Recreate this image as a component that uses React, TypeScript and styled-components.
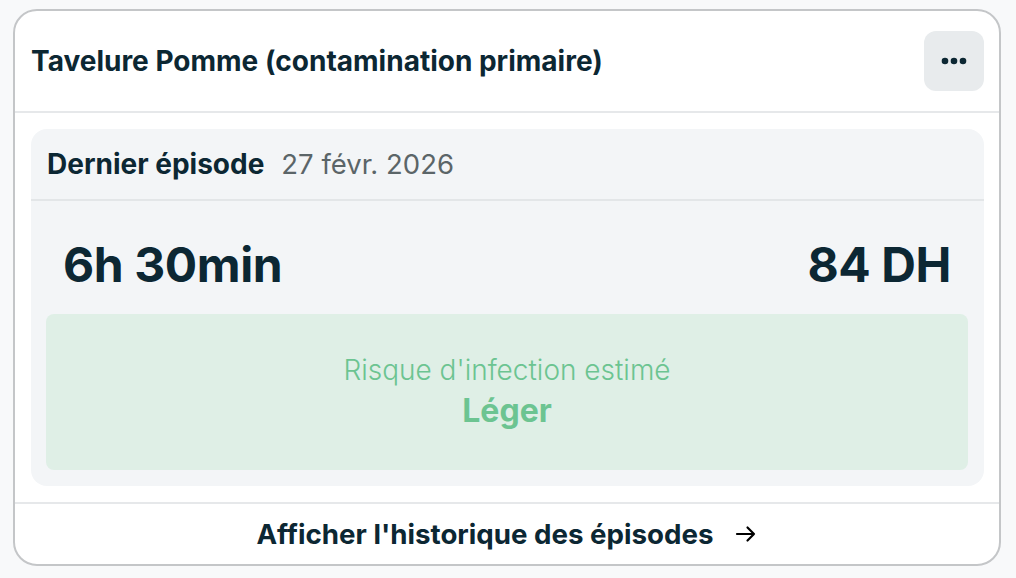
import React from 'react';
import styled, { createGlobalStyle } from 'styled-components';

const ink = '#0c2733';
const muted = '#5b6568';
const green = '#6cc491';

const GlobalStyle = createGlobalStyle`
  html, body {
    margin: 0;
    padding: 0;
    background: #f8f9fa;
    font-family: Inter, 'Noto Sans', sans-serif;
  }
`;

const Page = styled.div`
  padding: 9px 15px 12px 13px;
`;

const Card = styled.section`
  background: #fff;
  border: 2px solid #c4c6c8;
  border-radius: 24px;
  overflow: hidden;
  display: flex;
  flex-direction: column;
  height: 557px;
  box-sizing: border-box;
`;

const Header = styled.header`
  display: flex;
  align-items: center;
  justify-content: space-between;
  padding: 20px 15px 20px 16px;
  border-bottom: 2px solid #e6e8ea;
`;

const Title = styled.h1`
  margin: 0;
  font-size: 28px;
  font-weight: 700;
  color: ${ink};
`;

const MenuButton = styled.button`
  width: 60px;
  height: 60px;
  border: none;
  border-radius: 12px;
  background: #e8ebed;
  display: flex;
  align-items: center;
  justify-content: center;
  padding: 0;
  cursor: pointer;
`;

const Body = styled.div`
  padding: 16px 15px 16px 16px;
`;

const Panel = styled.div`
  background: #f3f5f7;
  border-radius: 16px;
  display: flex;
  flex-direction: column;
  height: 357px;
`;

const PanelHeader = styled.div`
  display: flex;
  align-items: center;
  gap: 17px;
  padding: 0 16px;
  height: 70px;
  border-bottom: 2px solid #e3e6e8;
`;

const Label = styled.span`
  font-size: 28px;
  font-weight: 700;
  color: ${ink};
`;

const DateText = styled.span`
  font-size: 27.5px;
  font-weight: 400;
  color: ${muted};
`;

const Stats = styled.div`
  display: flex;
  justify-content: space-between;
  align-items: center;
  padding: 14px 33px 0 32px;
  height: 113px;
  box-sizing: border-box;
`;

const Stat = styled.span`
  font-size: 48px;
  font-weight: 700;
  color: ${ink};
  letter-spacing: -0.4px;
`;

const Risk = styled.div`
  margin: 0 16px 16px 15px;
  flex: 1;
  background: #dfefe6;
  border-radius: 8px;
  display: flex;
  flex-direction: column;
  align-items: center;
  justify-content: center;
  gap: 5px;
  color: ${green};
`;

const RiskLabel = styled.span`
  font-size: 28px;
  font-weight: 300;
  line-height: 33px;
`;

const RiskLevel = styled.span`
  font-size: 32px;
  font-weight: 700;
  line-height: 38px;
`;

const Footer = styled.a`
  flex: 1;
  border-top: 2px solid #e6e8ea;
  display: flex;
  align-items: center;
  justify-content: center;
  gap: 20px;
  font-size: 27.7px;
  font-weight: 700;
  color: ${ink};
  text-decoration: none;
  cursor: pointer;
`;

const Arrow = styled.svg`
  width: 24px;
  height: 24px;
`;

export default function App() {
  return (
    <>
      <GlobalStyle />
      <Page>
        <Card>
          <Header>
            <Title>Tavelure Pomme (contamination primaire)</Title>
            <MenuButton aria-label="Options">
              <svg width="26" height="8" viewBox="0 0 26 8">
                <circle cx="4" cy="4" r="3.3" fill={ink} />
                <circle cx="13" cy="4" r="3.3" fill={ink} />
                <circle cx="22" cy="4" r="3.3" fill={ink} />
              </svg>
            </MenuButton>
          </Header>
          <Body>
            <Panel>
              <PanelHeader>
                <Label>Dernier épisode</Label>
                <DateText>27 févr. 2026</DateText>
              </PanelHeader>
              <Stats>
                <Stat>6h 30min</Stat>
                <Stat>84 DH</Stat>
              </Stats>
              <Risk>
                <RiskLabel>Risque d'infection estimé</RiskLabel>
                <RiskLevel>Léger</RiskLevel>
              </Risk>
            </Panel>
          </Body>
          <Footer>
            Afficher l'historique des épisodes
            <Arrow viewBox="0 0 24 24" fill="none" stroke="#000" strokeWidth="2.2" strokeLinecap="round" strokeLinejoin="round">
              <path d="M3 12h17M13.5 5.5l6.5 6.5-6.5 6.5" />
            </Arrow>
          </Footer>
        </Card>
      </Page>
    </>
  );
}
